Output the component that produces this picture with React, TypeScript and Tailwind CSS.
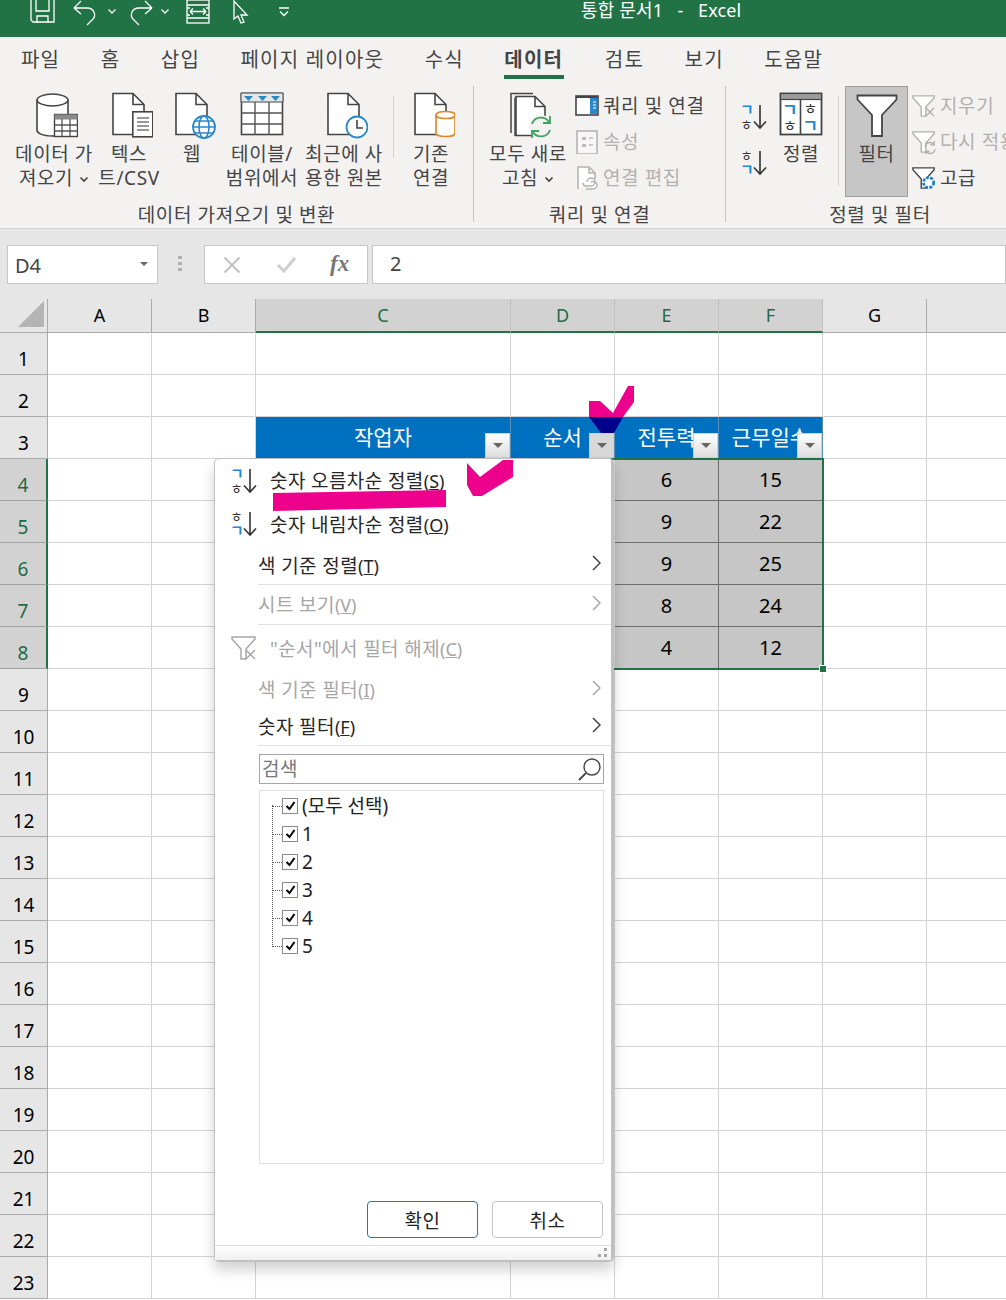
import type { ReactNode } from 'react';

const FONT = "font-['Noto_Sans','Noto_Sans_CJK_KR',sans-serif]";

const rows = Array.from({ length: 23 }, (_, i) => i + 1);
const columns = ['A', 'B', 'C', 'D', 'E', 'F', 'G', ''];
const tabs = ['파일', '홈', '삽입', '페이지 레이아웃', '수식', '데이터', '검토', '보기', '도움말'];
const tableRows: Record<number, [number, number]> = {
  4: [6, 15],
  5: [9, 22],
  6: [9, 25],
  7: [8, 24],
  8: [4, 12],
};

function Doc({ x = 7 }: { x?: number }) {
  return (
    <g fill="#fff" stroke="#444" strokeWidth="1.6">
      <path d={`M${x + 1} 1.5h20l11 11v30h-31z`} />
      <path d={`M${x + 21} 1.5v11h11`} fill="none" />
    </g>
  );
}

function IconData() {
  return (
    <svg width="48" height="48" viewBox="0 0 48 48">
      <path d="M7 8v30c0 3 5 6 15 6h16V8c0-3-7-6-15.500-6S7 5 7 8z" fill="#fff" stroke="#444" strokeWidth="1.6" />
      <path d="M7 8c0 3 7 6 15.500 6S38 11 38 8" fill="none" stroke="#444" strokeWidth="1.6" />
      <rect x="24.500" y="22.500" width="23" height="22" fill="#fff" stroke="#444" strokeWidth="1.4" />
      <rect x="24.500" y="22.500" width="23" height="5" fill="#8a8a8a" />
      <path d="M32 27v17M40 27v17M25 33h22M25 39h22" stroke="#555" strokeWidth="1.3" />
    </svg>
  );
}

function IconText() {
  return (
    <svg width="48" height="48" viewBox="0 0 48 48">
      <Doc x={7} />
      <rect x="27.800" y="19.800" width="20" height="25" fill="#fff" stroke="#444" strokeWidth="1.6" />
      <path d="M32 26h12M32 30h12M32 34h12M32 38h12" stroke="#777" strokeWidth="1.3" />
    </svg>
  );
}

function IconWeb() {
  return (
    <svg width="48" height="48" viewBox="0 0 48 48">
      <Doc x={7} />
      <circle cx="36" cy="35" r="11" fill="#fff" stroke="#2b88c8" strokeWidth="1.8" />
      <ellipse cx="36" cy="35" rx="5" ry="11" fill="none" stroke="#2b88c8" strokeWidth="1.6" />
      <path d="M25 35h22M27 29h18M27 41h18" stroke="#2b88c8" strokeWidth="1.6" />
    </svg>
  );
}

function IconTable() {
  return (
    <svg width="48" height="48" viewBox="0 0 48 48">
      <rect x="3.500" y="1.500" width="41" height="41" fill="#fff" stroke="#444" strokeWidth="1.6" />
      <path d="M3 10h42v-9H3z" fill="#e6e6e6" stroke="#444" strokeWidth="1" />
      <path d="M6 4h9l-4.500 5zM20 4h9l-4.500 5zM33 4h9l-4.500 5z" fill="#2b88c8" />
      <path d="M17 10v33M31 10v33M3 21h42M3 32h42" stroke="#555" strokeWidth="1.4" />
    </svg>
  );
}

function IconRecent() {
  return (
    <svg width="48" height="48" viewBox="0 0 48 48">
      <Doc x={7} />
      <circle cx="37" cy="35" r="10.500" fill="#fff" stroke="#2b88c8" strokeWidth="1.8" />
      <path d="M37 28v8h6" fill="none" stroke="#444" strokeWidth="1.6" />
    </svg>
  );
}

function IconExisting() {
  return (
    <svg width="48" height="48" viewBox="0 0 48 48">
      <Doc x={7} />
      <path d="M29 23v18c0 2 4 3.500 9.500 3.500S48 43 48 41V23c0-2-4-3.500-9.500-3.500S29 21 29 23z" fill="#fff" stroke="#e08a2c" strokeWidth="1.7" />
      <path d="M29 23c0 2 4 3.500 9.500 3.500S48 25 48 23" fill="none" stroke="#e08a2c" strokeWidth="1.7" />
    </svg>
  );
}

function IconRefresh() {
  return (
    <svg width="48" height="48" viewBox="0 0 48 48">
      <path d="M7 41V1.500h22" fill="none" stroke="#444" strokeWidth="1.5" />
      <path d="M11 44V5.500" fill="none" stroke="#444" strokeWidth="1.5" />
      <g fill="#fff" stroke="#444" strokeWidth="1.6">
        <path d="M12 4.500h19l10 10v29H12z" />
        <path d="M31 4.500v10h10" fill="none" />
      </g>
      <circle cx="37" cy="35" r="12" fill="#f3f2f1" />
      <path d="M28 32a9.500 9.500 0 0 1 17-2M46 38a9.500 9.500 0 0 1-17 2" fill="none" stroke="#3fa35f" strokeWidth="1.8" />
      <path d="M46 24v7h-7M28 46v-7h7" fill="none" stroke="#3fa35f" strokeWidth="1.8" />
    </svg>
  );
}

function IconQuery() {
  return (
    <svg width="24" height="24" viewBox="0 0 24 24">
      <rect x="1" y="2" width="22" height="19" fill="#fff" stroke="#444" strokeWidth="1.6" />
      <rect x="1" y="2" width="22" height="2" fill="#444" />
      <rect x="15" y="4" width="7" height="16" fill="#2b88c8" />
      <path d="M18 8h3M18 11h3M18 14h3" stroke="#fff" strokeWidth="1" />
    </svg>
  );
}

function IconProperties() {
  return (
    <svg width="24" height="24" viewBox="0 0 24 24">
      <rect x="2" y="1" width="20" height="23" fill="#f7f7f7" stroke="#b5b3b1" strokeWidth="1.6" />
      <path d="M7 7h4v3H7zM7 14h4v3H7z" fill="#bdbbb9" />
      <path d="M14 8h4M14 15h4" stroke="#bdbbb9" strokeWidth="1.4" />
    </svg>
  );
}

function IconLinks() {
  return (
    <svg width="24" height="24" viewBox="0 0 24 24">
      <path d="M3 23V1h11l6 6v6" fill="#fff" stroke="#b5b3b1" strokeWidth="1.6" />
      <path d="M14 1v6h6" fill="none" stroke="#b5b3b1" strokeWidth="1.6" />
      <path d="M12 16a4 4 0 1 1 4 4h-5a3 3 0 0 1-3-3M16 16a4 4 0 0 1 6 3c0 3-3 4-5 4h-6" fill="#fff" stroke="#b5b3b1" strokeWidth="1.5" />
    </svg>
  );
}

function SortSmall({ desc }: { desc?: boolean }) {
  const blue = <text x={-1} y={desc ? 26 : 12} fontSize="15" fill="#1f8ad0" fontWeight="700">ㄱ</text>;
  const black = <text x={-0.500} y={desc ? 11 : 26} fontSize="13" fill="#333">ㅎ</text>;
  return (
    <svg width="28" height="28" viewBox="0 0 28 28" className="font-['Noto_Sans_CJK_KR']">
      {blue}
      {black}
      <path d="M19 2v23M13 18.500l6 6.500 6-6.500" fill="none" stroke="#333" strokeWidth="1.6" />
    </svg>
  );
}

function IconSortBig() {
  return (
    <svg width="44" height="44" viewBox="0 0 44 44" className="font-['Noto_Sans_CJK_KR']">
      <rect x="1.500" y="1.500" width="41" height="41" fill="#fff" stroke="#444" strokeWidth="1.8" />
      <rect x="1.500" y="1.500" width="41" height="6" fill="#9b9b9b" stroke="#444" strokeWidth="1.2" />
      <path d="M21.500 7v36" stroke="#444" strokeWidth="1.6" />
      <text x="3" y="24" fontSize="17" fill="#1f8ad0" fontWeight="700">ㄱ</text>
      <text x="4" y="39" fontSize="15" fill="#333">ㅎ</text>
      <text x="24.500" y="22" fontSize="15" fill="#333">ㅎ</text>
      <text x="23.500" y="40" fontSize="17" fill="#1f8ad0" fontWeight="700">ㄱ</text>
    </svg>
  );
}

function IconFunnel() {
  return (
    <svg width="42" height="44" viewBox="0 0 42 44">
      <path d="M1.500 1.500h39v4L26 21v21H16V21L1.500 5.500z" fill="#fff" stroke="#444" strokeWidth="1.8" />
    </svg>
  );
}

function FunnelSmall({ color, children }: { color: string; children?: ReactNode }) {
  return (
    <svg width="26" height="26" viewBox="0 0 26 26">
      <path d="M1 2h23v2l-9 10v10H10V14L1 4z" fill="#fff" stroke={color} strokeWidth="1.500" />
      {children}
    </svg>
  );
}

function QatChevron() {
  return (
    <svg width="10" height="8" viewBox="0 0 10 8" className="mt-[8px]">
      <path d="M1.500 1.500L5 5l3.500-3.500" fill="none" stroke="#fff" strokeWidth="1.300" />
    </svg>
  );
}

function TitleBar() {
  return (
    <div className="flex h-[37px] items-start overflow-hidden bg-[#217346] pl-[30px] text-white">
      <svg width="25" height="25" viewBox="0 0 25 25" fill="none" stroke="#fff" strokeWidth="1.300">
        <path d="M1 -2h23v24H3l-2-2z" />
        <path d="M6 -2v13h13V-2M7 23v-7h11v7" />
      </svg>
      <svg width="26" height="26" viewBox="0 0 26 26" fill="none" stroke="#fff" strokeWidth="1.300" className="ml-[17px]">
        <path d="M2 8l7 6M2 8l7-7M2 8h13c8 0 9 8 6 11l-6 6" />
      </svg>
      <div className="ml-[9px]"><QatChevron /></div>
      <svg width="26" height="26" viewBox="0 0 26 26" fill="none" stroke="#fff" strokeWidth="1.300" className="ml-[11px]">
        <path d="M24 8l-7 6M24 8l-7-7M24 8H11C3 8 2 16 5 19l6 6" />
      </svg>
      <div className="ml-[6px]"><QatChevron /></div>
      <svg width="24" height="24" viewBox="0 0 24 24" fill="none" stroke="#fff" strokeWidth="1.300" className="ml-[16px]">
        <rect x="1" y="0" width="22" height="23" />
        <path d="M1 5h22M1 18h22M4 11.500h16M4 11.500l3-3M4 11.500l3 3M20 11.500l-3-3M20 11.500l-3 3M1 8h3M20 8h3M1 15h3M20 15h3" />
      </svg>
      <svg width="18" height="26" viewBox="0 0 18 26" fill="none" stroke="#fff" strokeWidth="1.300" className="ml-[22px]">
        <path d="M2 1v18l4-3 3 7 3-1-3-7h6z" />
      </svg>
      <svg width="12" height="10" viewBox="0 0 12 10" fill="none" stroke="#fff" strokeWidth="1.300" className="ml-[28px] mt-[7px]">
        <path d="M1 1h10M2 4.500l4 4 4-4" />
      </svg>
      <div className="ml-[291px] whitespace-pre text-[18px] leading-[20px] tracking-[0.15px]">통합 문서1   -   Excel</div>
    </div>
  );
}

function RibbonItem({ icon, lines, className }: { icon: ReactNode; lines: ReactNode[]; className: string }) {
  return (
    <div className={`flex flex-col items-center pt-[6px] ${className}`}>
      <div className="h-[48px] w-[48px]">{icon}</div>
      <div className="mt-[2px] whitespace-nowrap text-center text-[19px] leading-[24px] tracking-[0.6px] text-[#444]">
        {lines.map((line, i) => (
          <div key={i}>{line}</div>
        ))}
      </div>
    </div>
  );
}

function Group({ label, className, children }: { label: string; className: string; children: ReactNode }) {
  return (
    <div className={`mt-[7px] h-[136px] shrink-0 border-r border-[#c8c6c4] ${className}`}>
      <div className="flex h-[120px]">{children}</div>
      <div className="h-[16px] whitespace-nowrap text-center text-[19px] leading-[18px] tracking-[0.6px] text-[#444]">{label}</div>
    </div>
  );
}

function SmallCommand({ icon, label, disabled }: { icon: ReactNode; label: string; disabled?: boolean }) {
  return (
    <div className={`flex h-[36px] items-center gap-[4px] whitespace-nowrap text-[19px] tracking-[0.6px] ${disabled ? 'text-[#b3b0ad]' : 'text-[#444]'}`}>
      <div className="flex h-[26px] w-[24px] items-center justify-center">{icon}</div>
      {label}
    </div>
  );
}

function DownChevron() {
  return (
    <svg width="10" height="8" viewBox="0 0 10 8" className="ml-[6px] inline-block align-middle">
      <path d="M1.500 1.500L5 5l3.500-3.500" fill="none" stroke="#444" strokeWidth="1.600" />
    </svg>
  );
}

function Ribbon() {
  return (
    <div className="border-b border-[#d2d0ce] bg-[#f3f2f1]">
      <div className="flex h-[42px] gap-[40.5px] pl-[21px] pt-[8px] text-[20px] leading-[30px] tracking-[1.2px] text-[#444]">
        {tabs.map((tab) => (
          <div key={tab} className={tab === '데이터' ? 'h-[34px] w-[60px] whitespace-nowrap border-b-[4px] border-[#217346] font-bold tracking-[1.2px]' : 'h-[34px] whitespace-nowrap'}>
            {tab}
          </div>
        ))}
      </div>
      <div className="flex h-[149px] overflow-hidden">
        <Group label="데이터 가져오기 및 변환" className="w-[474px]">
          <RibbonItem icon={<IconData />} lines={['데이터 가', <>져오기<DownChevron /></>]} className="ml-[14px] w-[80px]" />
          <RibbonItem icon={<IconText />} lines={['텍스', '트/CSV']} className="ml-[5px] w-[60px]" />
          <RibbonItem icon={<IconWeb />} lines={['웹']} className="ml-[9px] w-[48px]" />
          <RibbonItem icon={<IconTable />} lines={['테이블/', '범위에서']} className="ml-[10px] w-[72px]" />
          <RibbonItem icon={<IconRecent />} lines={['최근에 사', '용한 원본']} className="ml-[6px] w-[80px]" />
          <div className="ml-[9px] mt-[10px] h-[62px] w-px bg-[#d2d0ce]" />
          <RibbonItem icon={<IconExisting />} lines={['기존', '연결']} className="ml-[13px] w-[48px]" />
        </Group>
        <Group label="쿼리 및 연결" className="w-[252px]">
          <RibbonItem icon={<IconRefresh />} lines={['모두 새로', <>고침<DownChevron /></>]} className="ml-[14px] w-[80px]" />
          <div className="ml-[7px] pt-[2px]">
            <SmallCommand icon={<IconQuery />} label="쿼리 및 연결" />
            <SmallCommand icon={<IconProperties />} label="속성" disabled />
            <SmallCommand icon={<IconLinks />} label="연결 편집" disabled />
          </div>
        </Group>
        <Group label="정렬 및 필터" className="w-[308px] border-r-0">
          <div className="ml-[15px] flex w-[28px] flex-col gap-[18px] pt-[17px]">
            <SortSmall />
            <SortSmall desc />
          </div>
          <RibbonItem icon={<div className="ml-[2px]"><IconSortBig /></div>} lines={['정렬']} className="ml-[8px] w-[48px]" />
          <div className="ml-[13px] mt-[10px] h-[90px] w-px bg-[#d2d0ce]" />
          <div className="ml-[6px] flex h-[111px] w-[63px] flex-col items-center border border-[#a19f9d] bg-[#c6c6c6] pt-[7px]">
            <IconFunnel />
            <div className="mt-[4px] text-[19px] leading-[24px] tracking-[0.6px] text-[#444]">필터</div>
          </div>
          <div className="ml-[4px] pt-[2px]">
            <SmallCommand label="지우기" disabled icon={
              <FunnelSmall color="#b3b0ad">
                <path d="M15 15l9 9M24 15l-9 9" stroke="#b3b0ad" strokeWidth="1.500" />
              </FunnelSmall>
            } />
            <SmallCommand label="다시 적용" disabled icon={
              <FunnelSmall color="#b3b0ad">
                <path d="M14 18a5.500 5.500 0 0 1 10-2M25 21a5.500 5.500 0 0 1-10 2M24 12v4h-4M15 26v-3h4" fill="none" stroke="#b3b0ad" strokeWidth="1.500" />
              </FunnelSmall>
            } />
            <SmallCommand label="고급" icon={
              <FunnelSmall color="#444">
                <circle cx="18" cy="18" r="5.500" fill="#fff" stroke="#1f7fc4" strokeWidth="3" strokeDasharray="3 1.500" />
              </FunnelSmall>
            } />
          </div>
        </Group>
      </div>
    </div>
  );
}

function FormulaBar() {
  return (
    <div className="flex h-[70px] items-start bg-[#e6e6e6] pt-[16px]">
      <div className="ml-[7px] flex h-[39px] w-[151px] items-center justify-between border border-[#c6c6c6] bg-white pl-[7px] pr-[9px] pt-[2px] text-[20px] text-[#444]">
        D4
        <span className="mb-[4px] h-0 w-0 border-x-[4px] border-t-[4px] border-x-transparent border-t-[#666]" />
      </div>
      <div className="ml-[20px] mt-[11px] flex flex-col gap-[3px]">
        <span className="h-[3px] w-[4px] bg-[#b0b0b0]" />
        <span className="h-[3px] w-[4px] bg-[#b0b0b0]" />
        <span className="h-[3px] w-[4px] bg-[#b0b0b0]" />
      </div>
      <div className="ml-[22px] flex h-[39px] w-[164px] items-center border border-[#c6c6c6] bg-white pl-[18px]">
        <svg width="18" height="18" viewBox="0 0 18 18" fill="none" stroke="#c4c4c4" strokeWidth="2.200">
          <path d="M1.500 1.500l15 15M16.500 1.500l-15 15" />
        </svg>
        <svg width="22" height="18" viewBox="0 0 22 18" fill="none" stroke="#cfcfcf" strokeWidth="3" className="ml-[35px]">
          <path d="M2 9l6 6L19 2" />
        </svg>
        <span className="ml-[32px] font-['Liberation_Serif',serif] text-[23px] font-bold italic text-[#777]">fx</span>
      </div>
      <div className="ml-[4px] flex h-[39px] flex-1 items-center border border-[#c6c6c6] bg-white pb-[2px] pl-[17px] text-[20px] text-[#444]">2</div>
    </div>
  );
}

function FilterButton({ active }: { active?: boolean }) {
  return (
    <span className={`absolute bottom-0 right-0 flex h-[25px] w-[25px] items-center justify-center border border-[#d0d0d0] ${active ? 'bg-[#d8d8d8]' : 'bg-gradient-to-b from-white to-[#dedede]'}`}>
      <span className="h-0 w-0 border-x-[5px] border-t-[5px] border-x-transparent border-t-[#666]" />
    </span>
  );
}

function HeaderCell({ label, active }: { label: string; active?: boolean }) {
  return (
    <div className="relative flex items-center justify-center overflow-hidden whitespace-nowrap border-b border-r border-[#5d8eb5] bg-[#0070c0] text-[21px] text-white">
      {label}
      <FilterButton active={active} />
    </div>
  );
}

function Sheet() {
  return (
    <div className="relative grid grid-cols-[48px_104px_104px_255px_104px_104px_104px_104px_80px] grid-rows-[34px_repeat(23,42px)] text-[19px] text-black">
      <div className="relative border-b border-r border-[#ababab] bg-[#e6e6e6]">
        <span className="absolute bottom-[5px] right-[3px] h-0 w-0 border-b-[26px] border-l-[26px] border-b-[#b4b4b4] border-l-transparent" />
      </div>
      {columns.map((col, i) => {
        const picked = i >= 2 && i <= 5;
        return (
          <div key={i} className={`flex items-center justify-center border-r text-[18px] ${picked ? 'border-b-2 border-[#c0c0c0] border-b-[#217346] bg-[#d2d2d2] text-[#1f6b45]' : 'border-b border-[#ababab] bg-[#e6e6e6] text-black'}`}>
            {col}
          </div>
        );
      })}
      {rows.map((row) => {
        const picked = row >= 4 && row <= 8;
        return [
          <div key={`h${row}`} className={`flex items-end justify-center border-b pb-[1px] leading-[28px] ${picked ? 'border-r-2 border-[#a0a0a0] border-r-[#217346] bg-[#d2d2d2] text-[#1f6b45]' : 'border-r border-[#ababab] bg-[#e6e6e6] text-black'}`}>
            {row}
          </div>,
          ...columns.map((_, i) => {
            const key = `${row}-${i}`;
            if (row === 3 && i === 2) return <HeaderCell key={key} label="작업자" />;
            if (row === 3 && i === 3) return <HeaderCell key={key} label="순서" active />;
            if (row === 3 && i === 4) return <HeaderCell key={key} label="전투력" />;
            if (row === 3 && i === 5) return <HeaderCell key={key} label="근무일수" />;
            if (tableRows[row] && (i === 4 || i === 5)) {
              return (
                <div key={key} className="flex items-center justify-center border-b border-r border-[#6e6e6e] bg-[#c6c6c6] text-[20px]">
                  {tableRows[row][i - 4]}
                </div>
              );
            }
            return <div key={key} className="border-b border-r border-[#d4d4d4] bg-white" />;
          }),
        ];
      })}
      {/* selection frame, lies under the filter menu */}
      <div className="pointer-events-none absolute left-[255px] top-[159px] h-[212px] w-[569px] border-2 border-[#217346]">
        <span className="absolute -bottom-[5px] -right-[5px] h-[8px] w-[8px] border border-white bg-[#217346]" />
      </div>
    </div>
  );
}

function MenuRow({ label, accel, disabled, arrow, icon, className }: { label: string; accel: string; disabled?: boolean; arrow?: boolean; icon?: ReactNode; className: string }) {
  return (
    <div className={`flex items-center whitespace-nowrap pr-[10px] text-[19px] tracking-[0.4px] ${disabled ? 'text-[#a6a6a6]' : 'text-[#262626]'} ${icon ? 'pl-[16px]' : 'pl-[43px]'} ${className}`}>
      {icon && <div className="flex w-[39px] items-center">{icon}</div>}
      <span className="mt-[2px]">
        {label}
        <span className="text-[18px] tracking-[0px]">(<span className="underline">{accel}</span>)</span>
      </span>
      {arrow && (
        <svg width="9" height="16" viewBox="0 0 9 16" fill="none" stroke={disabled ? '#a6a6a6' : '#444'} strokeWidth="1.500" className="mb-[4px] ml-auto">
          <path d="M1 1l7 7-7 7" />
        </svg>
      )}
    </div>
  );
}

function TreeRow({ label }: { label: string }) {
  return (
    <div className="flex h-[28px] items-center pl-[12px] text-[19px] leading-none text-[#222]">
      <span className="w-[10px] border-t border-dotted border-[#555]" />
      <span className="flex h-[16px] w-[16px] items-center justify-center border border-[#8a8a8a] bg-white">
        <svg width="11" height="10" viewBox="0 0 11 10" fill="none" stroke="#000" strokeWidth="2">
          <path d="M1.500 5l3 3 5-7" />
        </svg>
      </span>
      <span className="ml-[4px] pt-[1px]">{label}</span>
    </div>
  );
}

function FilterMenu() {
  return (
    <div className="absolute left-[214px] top-[458px] h-[804px] w-[400px] rounded-[5px] border border-b-[3px] border-r-[3px] border-[#c0c0c0] bg-white shadow-[0_8px_14px_rgba(0,0,0,0.18)]">
      <MenuRow className="h-[43px]" label="숫자 오름차순 정렬" accel="S" icon={<SortSmall />} />
      <MenuRow className="h-[44px]" label="숫자 내림차순 정렬" accel="O" icon={<SortSmall desc />} />
      <MenuRow className="h-[38px]" label="색 기준 정렬" accel="T" arrow />
      <div className="ml-[43px] h-px bg-[#e1e1e1]" />
      <MenuRow className="h-[39px]" label="시트 보기" accel="V" arrow disabled />
      <div className="ml-[43px] h-px bg-[#e1e1e1]" />
      <MenuRow className="h-[46px]" label={'"순서"에서 필터 해제'} accel="C" disabled icon={
        <FunnelSmall color="#a6a6a6">
          <path d="M15 15l9 9M24 15l-9 9" stroke="#a6a6a6" strokeWidth="1.500" />
        </FunnelSmall>
      } />
      <MenuRow className="h-[37px]" label="색 기준 필터" accel="I" arrow disabled />
      <MenuRow className="h-[37px]" label="숫자 필터" accel="F" arrow />
      <div className="ml-[43px] h-px bg-[#e1e1e1]" />
      <div className="ml-[44px] mt-[8px] flex h-[30px] w-[345px] items-center justify-between border border-[#a6a6a6] pl-[2px] pr-[1px] text-[19px] tracking-[0.4px] text-[#777]">
        <span className="pt-[1px]">검색</span>
        <svg width="25" height="25" viewBox="0 0 25 25" fill="none" stroke="#444" strokeWidth="1.400">
          <circle cx="15" cy="10" r="8" />
          <path d="M9 16l-7 7" strokeWidth="1.800" />
        </svg>
      </div>
      <div className="relative ml-[44px] mt-[6px] h-[374px] w-[345px] border border-[#e1e1e1] pt-[1px]">
        <span className="absolute left-[12px] top-[14px] h-[140px] border-l border-dotted border-[#555]" />
        <TreeRow label="(모두 선택)" />
        {[1, 2, 3, 4, 5].map((n) => (
          <TreeRow key={n} label={String(n)} />
        ))}
      </div>
      <div className="mt-[37px] flex justify-end gap-[14px] pr-[8px] text-[19px] tracking-[0.4px] text-[#222]">
        <button className="h-[37px] w-[111px] rounded-[4px] border border-[#1f77b4] bg-white pt-[3px]">확인</button>
        <button className="h-[37px] w-[111px] rounded-[4px] border border-[#c4c4c4] bg-white pt-[3px]">취소</button>
      </div>
      <div className="mt-[7px] flex h-[15px] items-end justify-end border-t border-[#e1e1e1] bg-gradient-to-b from-white to-[#f0f0f0] pb-[2px] pr-[3px]">
        <svg width="10" height="10" viewBox="0 0 10 10" fill="#a6a6a6">
          <rect x="6" y="0" width="3" height="3" />
          <rect x="0" y="6" width="3" height="3" />
          <rect x="6" y="6" width="3" height="3" />
        </svg>
      </div>
    </div>
  );
}

function PinkMarks() {
  return (
    <svg width="1006" height="1300" viewBox="0 0 1006 1300" className="pointer-events-none absolute left-0 top-0">
      <path d="M589 401h11l13 12 15-27h6v16l-11 15H589z" fill="#ec008c" />
      <path d="M589 417h34l-9 16h-13z" fill="#00008a" />
      <path d="M273 493L446 490V507L273 511z" fill="#ec008c" />
      <path d="M467 463L480 477L503 460H513V477L482 496H473L467 485z" fill="#ec008c" />
    </svg>
  );
}

export default function App() {
  return (
    <div className={`relative h-[1300px] w-[1006px] overflow-hidden bg-white ${FONT}`}>
      <TitleBar />
      <Ribbon />
      <FormulaBar />
      <Sheet />
      <FilterMenu />
      <PinkMarks />
    </div>
  );
}
